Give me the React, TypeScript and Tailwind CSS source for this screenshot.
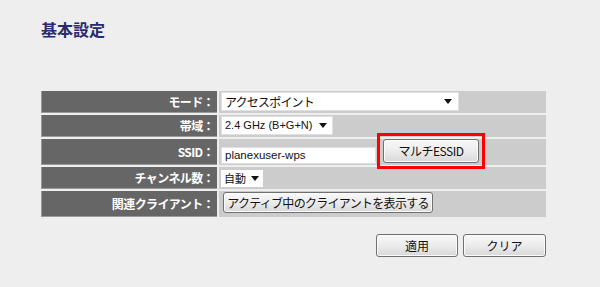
import React from 'react';

const font = { fontFamily: '"Noto Sans CJK JP", "Liberation Sans", sans-serif' };
const latin = { fontFamily: '"Liberation Sans", "Noto Sans CJK JP", sans-serif' };

const Caret = () => (
	<svg width="8" height="5" viewBox="0 0 8 5" className="shrink-0">
		<path d="M0 0h8L4 5z" fill="#111" />
	</svg>
);

const Btn: React.FC<{ className?: string; children: React.ReactNode }> = ({ className = '', children }) => (
	<div
		className={`flex shrink-0 items-center justify-center whitespace-nowrap rounded-[3px] border border-[#707070] bg-gradient-to-b from-[#f8f8f8] via-[#ececec] to-[#d8d8d8] text-[12px] text-[#111] shadow-[inset_0_0_0_1px_#fbfbfb] ${className}`}
	>
		{children}
	</div>
);

const Row: React.FC<{ label: string; h: string; children: React.ReactNode }> = ({ label, h, children }) => (
	<div className={`flex gap-[2px] ${h}`}>
		<div className="flex w-[176px] shrink-0 items-center justify-end whitespace-nowrap border-l border-b border-[#9a9a9a] bg-[#666666] pr-[3px] text-[12px] font-bold tracking-[-0.6px] text-white">
			{label}：
		</div>
		<div className="flex flex-1 bg-[#cccccc] pl-[2px]">{children}</div>
	</div>
);

export default function App() {
	return (
		<div className="h-[287px] w-[600px] overflow-hidden bg-[#eeeeee]" style={font}>
			<div className="pl-[41px] pt-[18px] text-[16px] font-bold leading-[22px] text-[#2a2a6e]">基本設定</div>
			<div className="ml-[41px] mt-[51px] flex w-[505px] flex-col gap-[2px]">
				<Row label="モード" h="h-[22px]">
					<div className="mt-[1px] flex h-[19px] w-[238px] items-center justify-between whitespace-nowrap border border-[#e0e0e0] bg-white pl-[3px] pr-[6px] text-[12px] tracking-[-0.8px] text-[#111]">
						<span>アクセスポイント</span>
						<Caret />
					</div>
				</Row>
				<Row label="帯域" h="h-[22px]">
					<div className="mt-[1px] flex h-[19px] w-[112px] items-center justify-between whitespace-nowrap border border-[#e0e0e0] bg-white pl-[3px] pr-[5px] text-[11px] text-[#111]" style={latin}>
						<span>2.4 GHz (B+G+N)</span>
						<Caret />
					</div>
				</Row>
				<Row label="SSID" h="h-[26px]">
					<div className="flex items-start">
						<div className="mt-[8px] flex h-[17px] w-[155px] shrink-0 items-center whitespace-nowrap border border-[#e0e0e0] bg-white pl-[3px] text-[11.5px] text-[#111]" style={latin}>
							planexuser-wps
						</div>
						<div className="relative ml-[7px]">
							<Btn className="h-[24px] w-[96px] tracking-[-0.5px]">マルチESSID</Btn>
							<div className="pointer-events-none absolute -left-[6px] -top-[6px] h-[36px] w-[108px] border-[3px] border-[#ff0000]" />
						</div>
					</div>
				</Row>
				<Row label="チャンネル数" h="h-[22px]">
					<div className="mt-[3px] flex h-[17px] w-[42px] items-center justify-between whitespace-nowrap bg-white pl-[3px] pr-[4px] text-[11px] text-[#111]">
						<span>自動</span>
						<Caret />
					</div>
				</Row>
				<Row label="関連クライアント" h="h-[26px]">
					<Btn className="ml-[2px] mt-[1px] h-[21px] w-[210px] tracking-[-0.7px]">アクティブ中のクライアントを表示する</Btn>
				</Row>
			</div>
			<div className="ml-[376px] mt-[17px] flex gap-[5px]">
				<Btn className="h-[23px] w-[82px]">適用</Btn>
				<Btn className="h-[23px] w-[83px]">クリア</Btn>
			</div>
		</div>
	);
}
